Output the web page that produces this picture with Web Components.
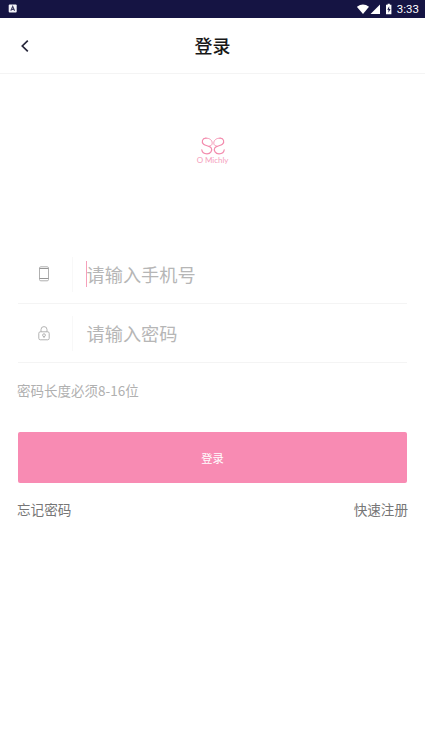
<!DOCTYPE html>
<html lang="zh-CN">
<head>
<meta charset="utf-8">
<title>登录</title>
<style>
html, body { margin: 0; height: 100%; background: #fff; }
body { font-family: Roboto, "Noto Sans CJK SC", sans-serif; overflow: hidden; }
</style>
</head>
<body>
<login-page></login-page>
<script>
function define(name, markup) {
  const template = document.createElement('template');
  template.innerHTML = markup;
  customElements.define(name, class extends HTMLElement {
    constructor() {
      super();
      this.attachShadow({ mode: 'open' }).append(template.content.cloneNode(true));
    }
  });
}

define('status-bar', `
<style>
:host { display: flex; box-sizing: border-box; height: 17.5px; background: #151443; color: #fff; align-items: center; justify-content: space-between; padding: 0 6px 0 8px; }
svg { display: block; }
.right { display: flex; align-items: center; }
.time { font-size: 11.5px; line-height: 17px; margin-left: 4px; padding-top: 1px; }
</style>
<svg width="9" height="9" viewBox="0 0 9 9"><rect x=".7" y=".5" width="8" height="8" rx="1" fill="#f4f4fa"/><path d="M2.8 6.7 4.7 2.3 6.6 6.7M3.5 5.4h2.4" fill="none" stroke="#3c3b60" stroke-width="1.1"/></svg>
<div class="right">
<svg width="36" height="12" viewBox="0 0 36 12" fill="#fff"><path d="M-.2 3.8Q6 -1 12 3.8L6 11Z"/><path d="M23 1.5V11H13.5Z"/><path d="M30.6.8h2.2v1h1.6v9.5H29V1.8h1.6Z"/><path d="m32.2 3.2-2 3.6h1.3v3l2-3.8h-1.3Z" fill="#151443"/></svg>
<span class="time">3:33</span>
</div>`);

define('nav-bar', `
<style>
:host { display: grid; grid-template-columns: 60px 1fr 60px; align-items: center; box-sizing: border-box; height: 56.5px; border-bottom: 1px solid #f4f4f4; color: #171717; }
svg { display: block; margin: 1px 0 0 20px; }
h1 { margin: 0; padding-top: 3px; font-size: 18px; line-height: 26px; font-weight: 500; text-align: center; }
</style>
<svg width="10" height="14" viewBox="0 0 10 14"><path d="M7.8 1.7 2.3 7l5.5 5.3" fill="none" stroke="#26263a" stroke-width="1.7"/></svg>
<h1><slot></slot></h1>`);

define('brand-logo', `
<style>
:host { display: flex; flex-direction: column; align-items: center; color: #f5a0bc; }
svg { display: block; }
span { font: 8px/9px Lato, sans-serif; letter-spacing: -.05px; white-space: nowrap; margin-top: 1px; }
</style>
<svg width="26" height="18" viewBox="0 0 26 18" fill="none" stroke="#f38bad" stroke-linecap="round">
<path d="M6 1.2C2.2 1 1.2 5.2 3.6 7.2 5.6 8.8 9.6 8.8 11.2 10.8 12.8 13.6 10.4 16.8 7 16.8 3.8 16.8 2 15 1.8 12.8" stroke-width="1.2"/>
<path d="M6 1.2C9.6.8 12.4 3.4 12.2 6.4 12.1 8 10.8 9 9.2 9.2" stroke-width=".9"/>
<path d="M20 1.2C23.8 1 24.8 5.2 22.4 7.2 20.4 8.8 16.4 8.8 14.8 10.8 13.2 13.6 15.6 16.8 19 16.8 22.2 16.8 24 15 24.2 12.8" stroke-width="1.2"/>
<path d="M20 1.2C16.4.8 13.6 3.4 13.8 6.4 13.9 8 15.2 9 16.8 9.2" stroke-width=".9"/>
</svg>
<span><slot></slot></span>`);

define('input-row', `
<style>
:host { display: flex; align-items: center; box-sizing: border-box; height: 59px; border-bottom: 1px solid #f4f4f4; color: #b6b6b6; }
.icon { width: 55px; height: 35px; box-sizing: border-box; border-right: 1px solid #f8f8f8; padding-right: 3px; display: flex; align-items: center; justify-content: center; }
.field { position: relative; padding: 3px 0 0 13.5px; font-size: 18.2px; line-height: 28px; }
:host([active]) .field::before { content: ""; position: absolute; left: 13px; top: 2px; width: 1px; height: 26px; background: #f6a0ba; }
</style>
<div class="icon"><slot name="icon"></slot></div>
<div class="field"><slot></slot></div>`);

define('phone-icon', `
<style>:host, svg { display: block; }</style>
<svg width="12" height="16" viewBox="0 0 12 16" fill="none" stroke="#969696" stroke-width="1"><rect x="1.5" y=".8" width="9" height="14" rx="1.3" stroke="#b0b0b0"/><path d="M1.5 2.5h9M1.5 12.5h9"/></svg>`);

define('lock-icon', `
<style>:host, svg { display: block; }</style>
<svg width="12" height="15" viewBox="0 0 12 15" fill="none" stroke="#aaa" stroke-width=".9"><rect x=".8" y="5.8" width="10.4" height="8" rx="1.5"/><path d="M3 5.8V3.6a3 3 0 0 1 6 0v2.2M6 10.5V12"/><circle cx="6" cy="9.2" r="1.4"/></svg>`);

define('submit-button', `
<style>
:host { display: block; }
button { display: block; width: 100%; height: 51px; padding: 1px 0 0; border: 0; border-radius: 2px; background: #f88bb3; color: #fff; font: inherit; font-size: 11.3px; }
</style>
<button type="button"><slot></slot></button>`);

define('link-row', `
<style>
:host { display: flex; justify-content: space-between; font-size: 13.6px; line-height: 20px; color: #767676; }
</style>
<slot name="start"></slot><slot name="end"></slot>`);

define('login-page', `
<style>
:host { display: block; height: 100%; background: #fff; }
brand-logo { padding-top: 63px; height: 108px; }
main { padding: 0 18px; }
.hint { margin: 17.4px 0 0 -1px; font-family: "Noto Sans CJK SC", sans-serif; font-size: 13.5px; line-height: 20px; color: #b0b0b0; }
submit-button { margin-top: 31.6px; }
link-row { margin: 17px -1px 0; }
</style>
<status-bar></status-bar>
<nav-bar>登录</nav-bar>
<brand-logo>O Michly</brand-logo>
<main>
<input-row active><phone-icon slot="icon"></phone-icon>请输入手机号</input-row>
<input-row><lock-icon slot="icon"></lock-icon>请输入密码</input-row>
<p class="hint">密码长度必须8-16位</p>
<submit-button>登录</submit-button>
<link-row><span slot="start">忘记密码</span><span slot="end">快速注册</span></link-row>
</main>`);
</script>
</body>
</html>
